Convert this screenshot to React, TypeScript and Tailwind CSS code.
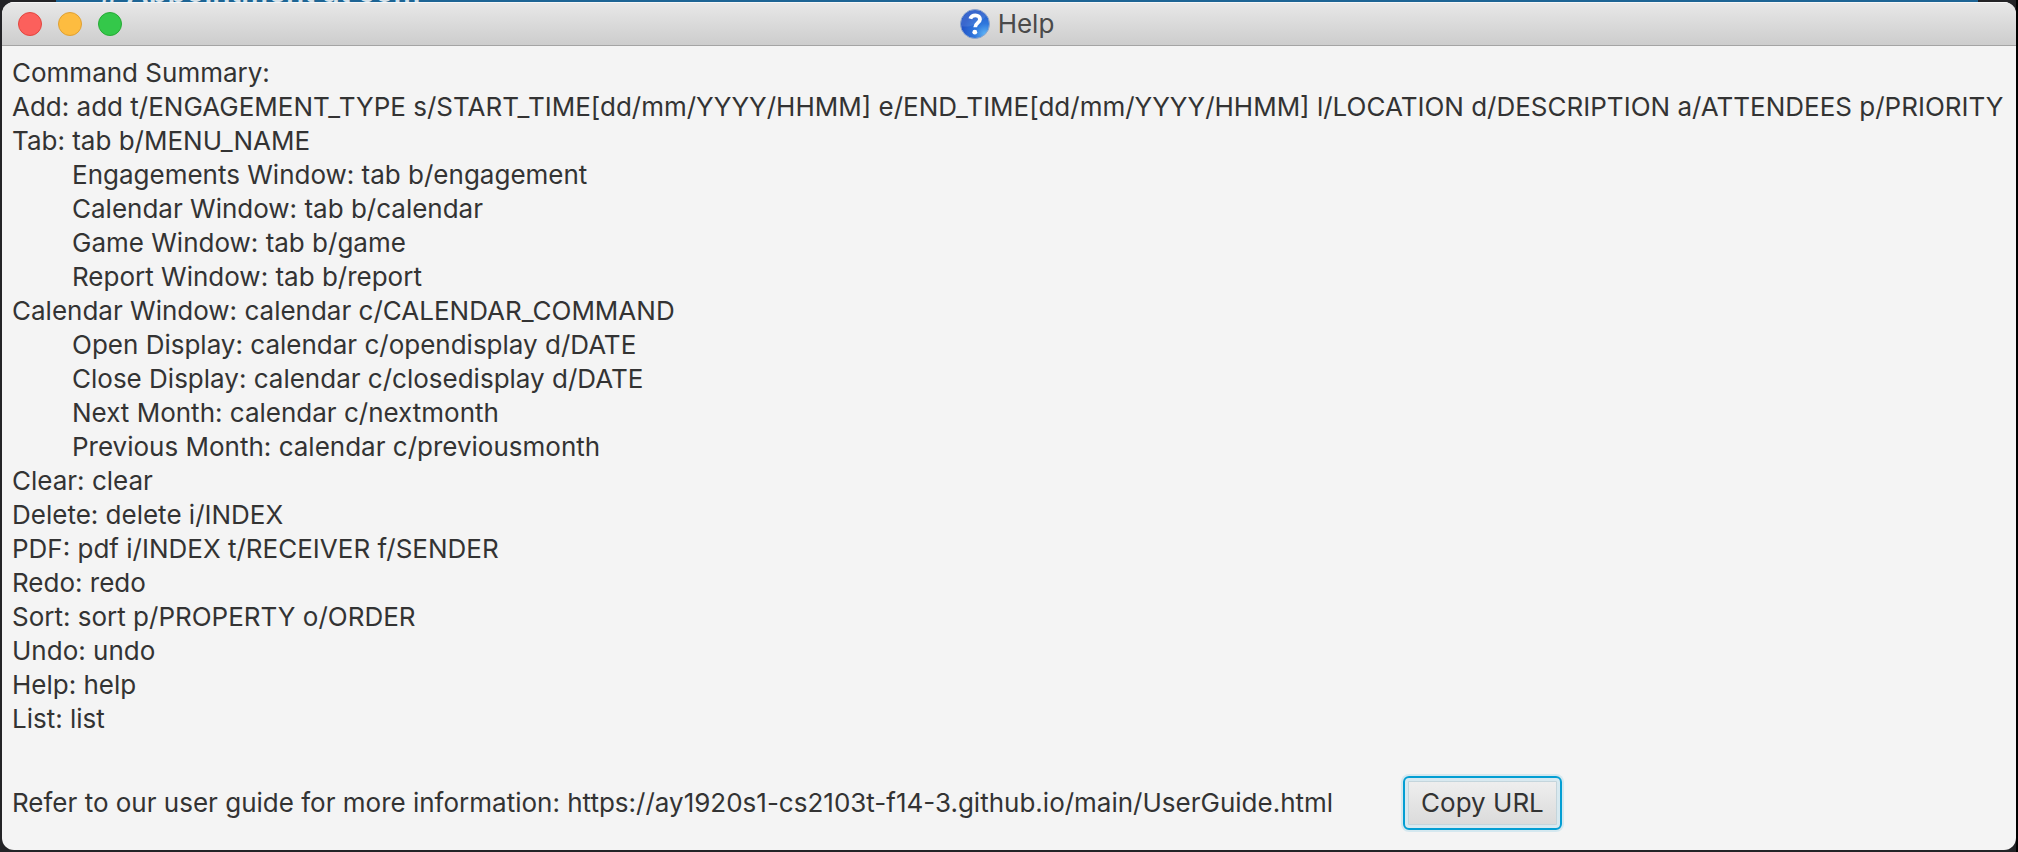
import type { ReactNode } from "react";

const commands: { text: string; nested?: boolean }[] = [
  { text: "Command Summary:" },
  { text: "Add: add t/ENGAGEMENT_TYPE s/START_TIME[dd/mm/YYYY/HHMM] e/END_TIME[dd/mm/YYYY/HHMM] l/LOCATION d/DESCRIPTION a/ATTENDEES p/PRIORITY" },
  { text: "Tab: tab b/MENU_NAME" },
  { text: "Engagements Window: tab b/engagement", nested: true },
  { text: "Calendar Window: tab b/calendar", nested: true },
  { text: "Game Window: tab b/game", nested: true },
  { text: "Report Window: tab b/report", nested: true },
  { text: "Calendar Window: calendar c/CALENDAR_COMMAND" },
  { text: "Open Display: calendar c/opendisplay d/DATE", nested: true },
  { text: "Close Display: calendar c/closedisplay d/DATE", nested: true },
  { text: "Next Month: calendar c/nextmonth", nested: true },
  { text: "Previous Month: calendar c/previousmonth", nested: true },
  { text: "Clear: clear" },
  { text: "Delete: delete i/INDEX" },
  { text: "PDF: pdf i/INDEX t/RECEIVER f/SENDER" },
  { text: "Redo: redo" },
  { text: "Sort: sort p/PROPERTY o/ORDER" },
  { text: "Undo: undo" },
  { text: "Help: help" },
  { text: "List: list" },
];

const userGuideUrl = "https://ay1920s1-cs2103t-f14-3.github.io/main/UserGuide.html";

function Backdrop({ children }: { children: ReactNode }) {
  return (
    <div className="relative min-h-screen bg-[#232326] p-0.5 font-['Inter',sans-serif] text-[#333333] flex flex-col">
      <div className="absolute inset-y-0 right-0 w-0.5 bg-black" />
      <div
        aria-hidden="true"
        className="absolute top-0 right-10 left-14 flex h-0.5 items-end overflow-hidden bg-[#1d6494] pl-11 text-[30px] leading-[30px] font-semibold text-[#d5e2ea]"
      >
        <span className="-mb-1"># Appointment at com</span>
      </div>
      {children}
    </div>
  );
}

function HelpIcon() {
  return (
    <svg viewBox="0 0 30 30" className="size-[30px]" aria-hidden="true">
      <defs>
        <radialGradient id="ball" cx="0.85" cy="0.85" r="0.8">
          <stop offset="0" stopColor="#5fb4f5" />
          <stop offset="0.45" stopColor="#2f78dd" />
          <stop offset="1" stopColor="#2456c8" />
        </radialGradient>
      </defs>
      <circle cx="15" cy="15" r="14.5" fill="url(#ball)" stroke="#8ea6cc" />
      <path d="M1.5 17C8 19 19 16 26.500 6.500A14 14 0 0 0 1.500 17Z" fill="#ffffff" opacity="0.1" />
      <path d="M10.300 9.800C11 7.500 13 6.300 15.400 6.300C18.200 6.300 20 8 20 10.200C20 14 15.200 13.800 15.200 18.300" fill="none" stroke="#ffffff" strokeWidth="3.800" />
      <circle cx="14.800" cy="23.200" r="2.400" fill="#ffffff" />
    </svg>
  );
}

function TitleBar() {
  return (
    <header className="grid h-11 grid-cols-[1fr_auto_1fr] items-center border-b border-[#a4a4a4] bg-linear-to-b from-[#e8e8e8] to-[#cdcdcd] px-4 shadow-[inset_0_1px_0_#f6f6f6]">
      <div className="flex gap-4">
        <button type="button" aria-label="Close" className="size-6 rounded-full border border-[#e2463f] bg-[#fc605c]" />
        <button type="button" aria-label="Minimize" className="size-6 rounded-full border border-[#dfa033] bg-[#fdbc40]" />
        <button type="button" aria-label="Zoom" className="size-6 rounded-full border border-[#27aa35] bg-[#34c84a]" />
      </div>
      <div className="flex items-center gap-2 pr-1">
        <HelpIcon />
        <h1 className="text-[26px] leading-8 text-[#4a4a4a]">Help</h1>
      </div>
    </header>
  );
}

export default function App() {
  return (
    <Backdrop>
      <div className="relative flex flex-1 flex-col overflow-hidden rounded-xl bg-[#f4f4f4]">
        <TitleBar />
        <main className="px-2.5 pt-2.5 pb-4 text-[26px]">
          <ul className="leading-[34px]">
            {commands.map(({ text, nested }) => (
              <li key={text} className={nested ? "pl-[60px]" : "whitespace-nowrap"}>
                {text}
              </li>
            ))}
          </ul>
          <div className="mt-10 flex items-center gap-[70px]">
            <p className="leading-[34px]">Refer to our user guide for more information: {userGuideUrl}</p>
            <button
              type="button"
              onClick={() => navigator.clipboard?.writeText(userGuideUrl)}
              className="h-[54px] rounded-md border-2 border-[#039ed3] bg-linear-to-b from-[#f0f0f0] to-[#d9d9d9] px-4 leading-8 shadow-[0_0_0_2px_#d5e8ef,inset_0_0_0_3px_#d8e9f0,inset_0_0_0_4px_#c4d5dc]"
            >
              Copy URL
            </button>
          </div>
        </main>
      </div>
    </Backdrop>
  );
}
